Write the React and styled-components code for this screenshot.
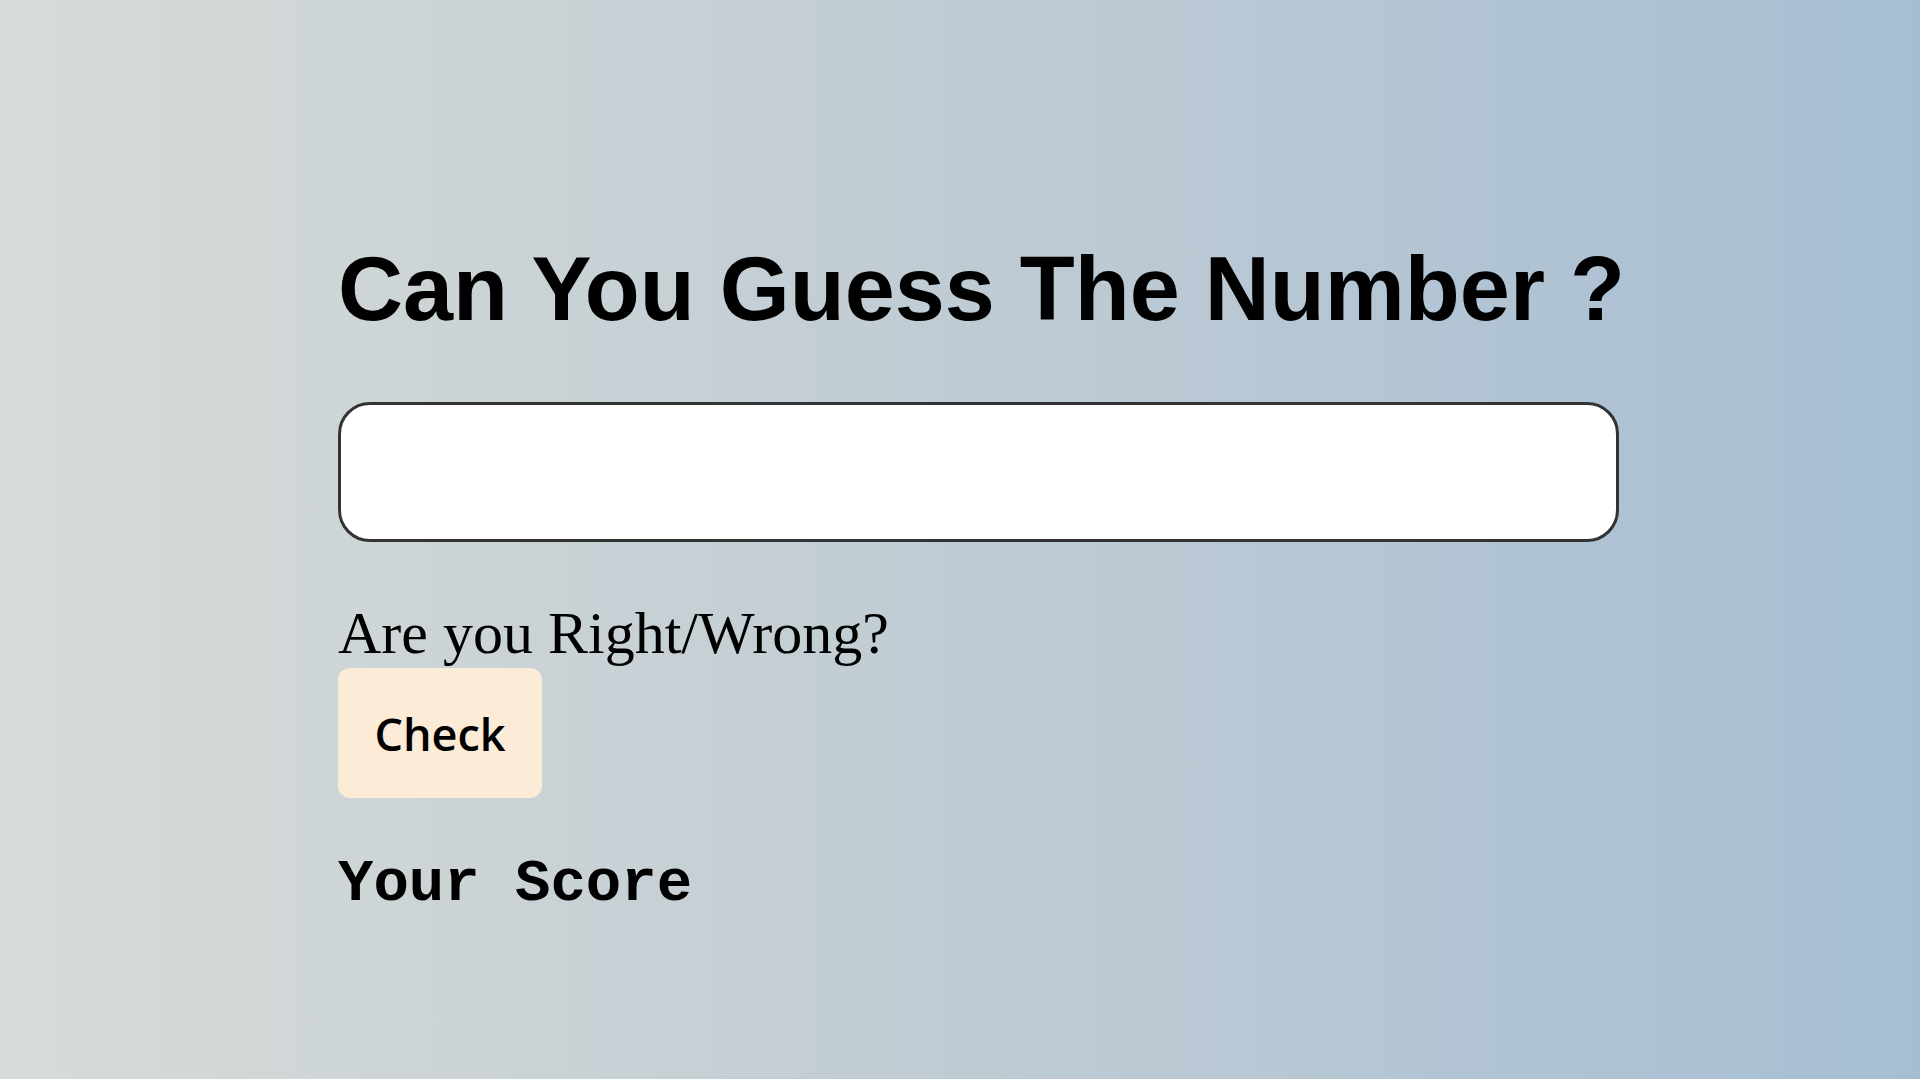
import React from "react";
import styled, { createGlobalStyle } from "styled-components";

const GlobalStyle = createGlobalStyle`
  html, body {
    margin: 0;
    padding: 0;
  }
  body {
    font-family: "Liberation Serif", "Times New Roman", serif;
  }
`;

const Page = styled.div`
  min-height: 100vh;
  background: linear-gradient(to right, #d7dbd8 0%, #c2cdd4 45%, #a6bed3 100%);
  box-sizing: border-box;
  padding: 238px 0 0 338px;
`;

const Game = styled.div`
  display: flex;
  flex-direction: column;
  align-items: flex-start;
  width: 1282px;
`;

const Title = styled.h1`
  margin: 0;
  font-family: "Liberation Sans", Arial, sans-serif;
  font-size: 90px;
  font-weight: 700;
  line-height: normal;
  white-space: nowrap;
  color: #000;
`;

const GuessInput = styled.input`
  box-sizing: border-box;
  width: 1281px;
  height: 140px;
  margin-top: 61px;
  border: 3px solid #333;
  border-radius: 32px;
  background: #fff;
  outline: none;
  font-size: 48px;
  padding: 0 30px;
`;

const Message = styled.p`
  margin: 57px 0 0;
  font-family: "Liberation Serif", "Times New Roman", serif;
  font-size: 60px;
  line-height: normal;
  color: #000;
`;

const CheckButton = styled.button`
  display: flex;
  align-items: center;
  justify-content: center;
  width: 204px;
  height: 130px;
  border: none;
  border-radius: 12px;
  background: #fbebd7;
  font-family: "Open Sans", "Noto Sans", sans-serif;
  font-weight: 600;
  font-size: 45px;
  color: #000;
  cursor: pointer;
`;

const Score = styled.p`
  margin: 53px 0 0;
  font-family: "Liberation Mono", "Courier New", monospace;
  font-weight: 700;
  font-size: 59px;
  line-height: normal;
  color: #000;
`;

const App = () => {
  return (
    <>
      <GlobalStyle />
      <Page>
        <Game>
          <Title>Can You Guess The Number ?</Title>
          <GuessInput type="number" />
          <Message>Are you Right/Wrong?</Message>
          <CheckButton>Check</CheckButton>
          <Score>Your Score</Score>
        </Game>
      </Page>
    </>
  );
};

export default App;
